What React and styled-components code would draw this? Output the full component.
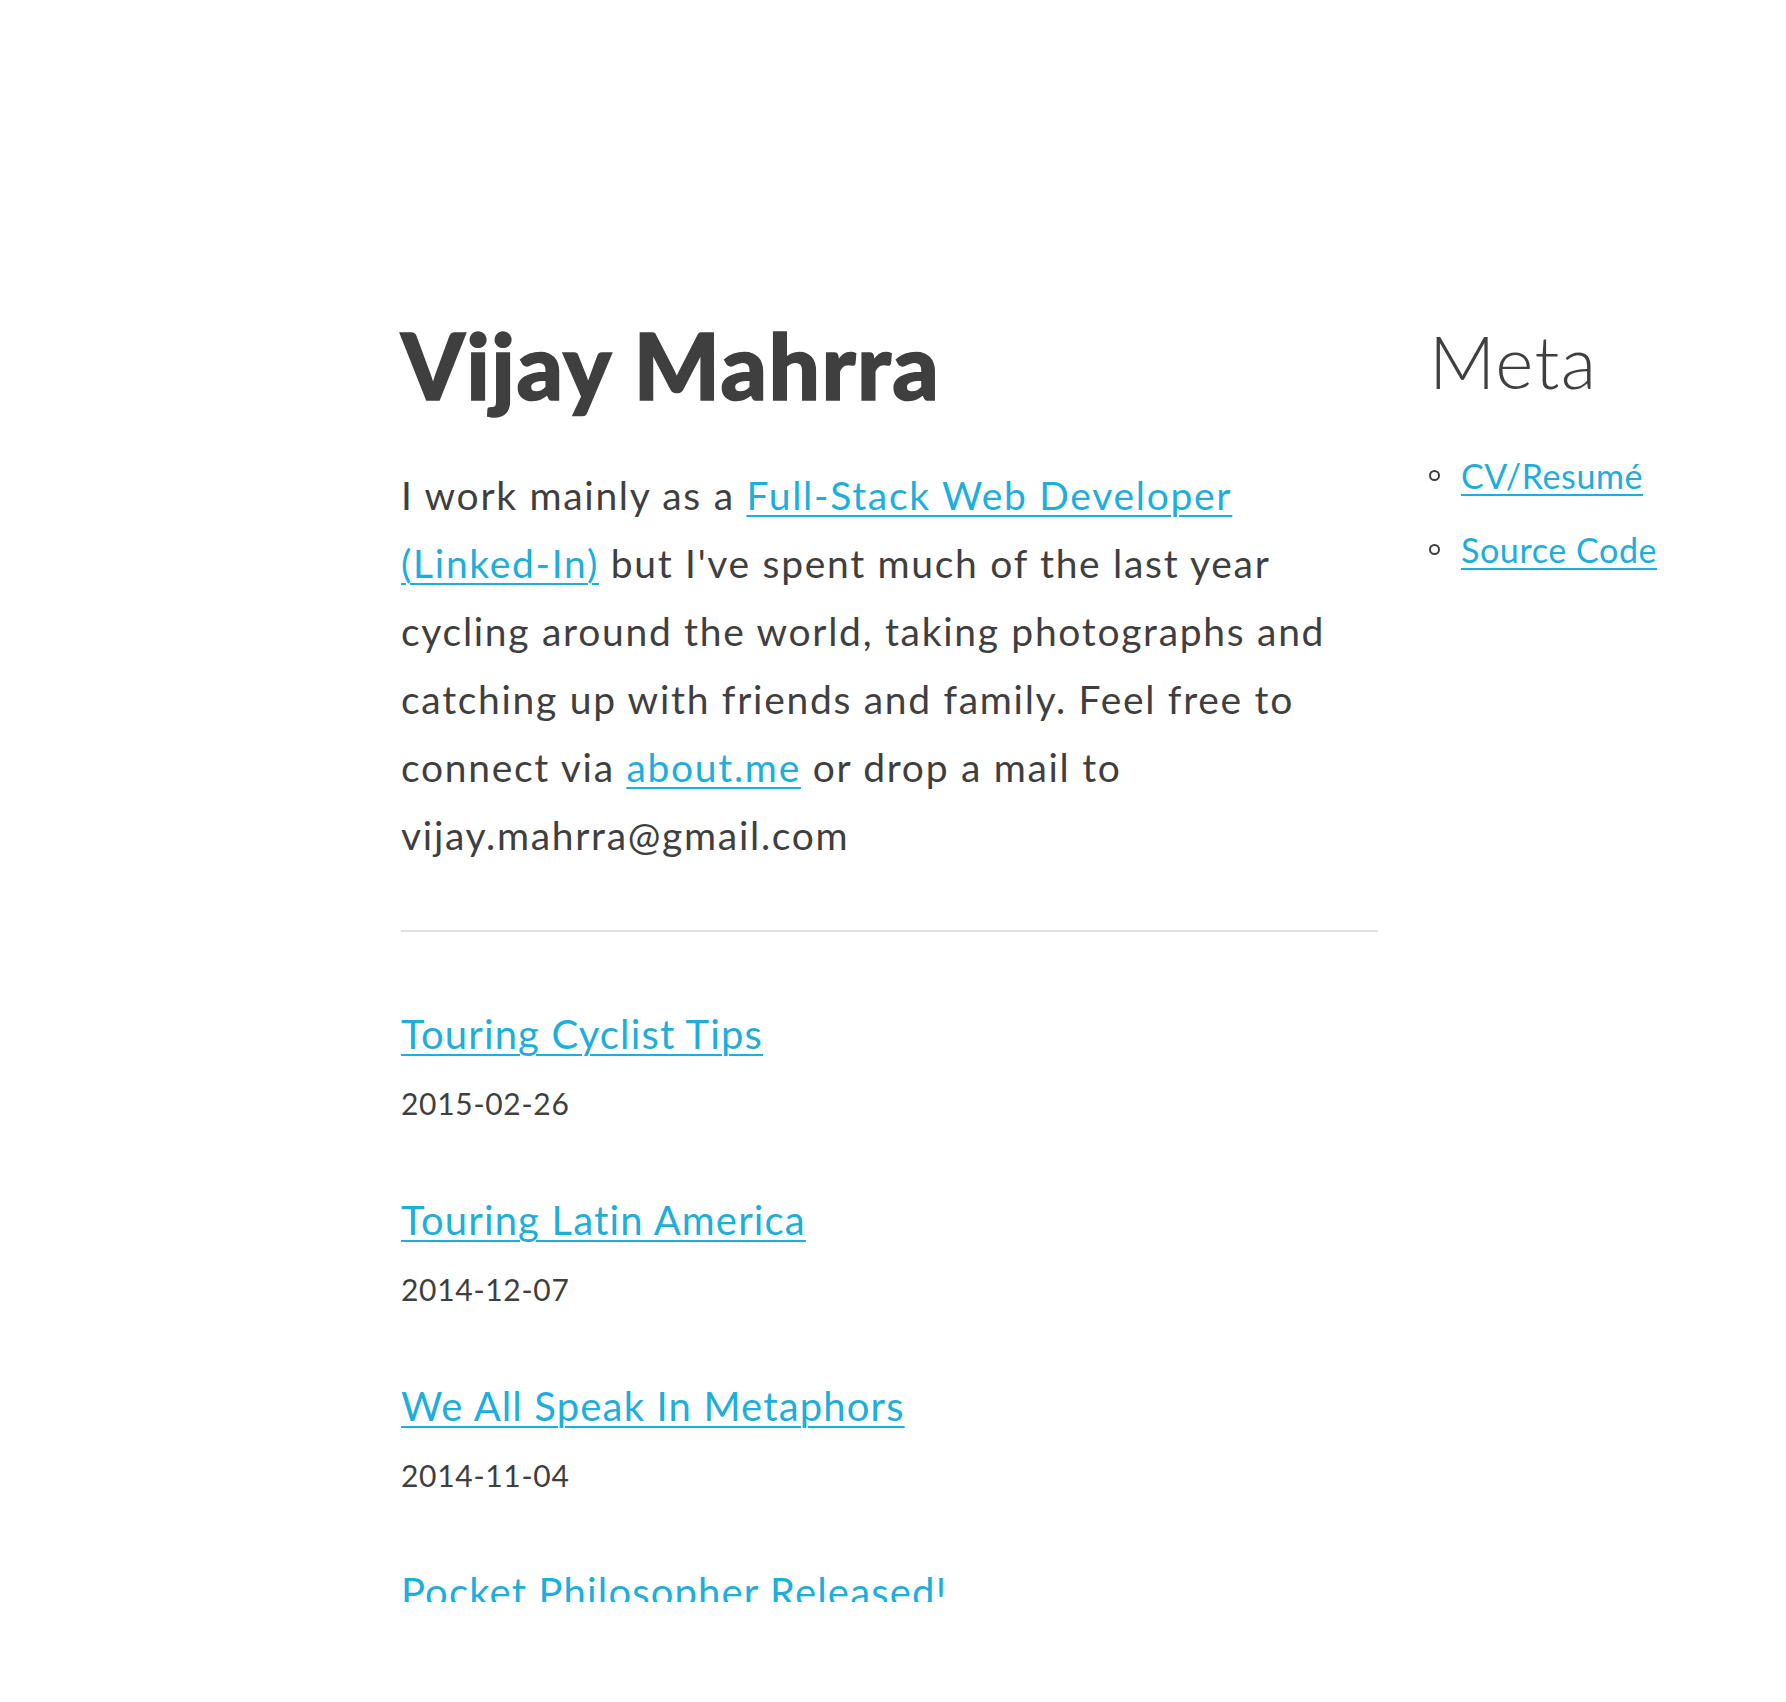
import React from 'react'
import styled, { createGlobalStyle } from 'styled-components';

const GlobalStyle = createGlobalStyle`
  html, body {
    margin: 0;
    padding: 0;
    background: #fff;
  }
  body {
    font-family: Lato, "Open Sans", sans-serif;
    color: #3f3f3f;
  }
`;

const Page = styled.div`
  height: 1602px;
  overflow: hidden;
  padding: 310px 0 0 401px;
  box-sizing: border-box;
  display: flex;
  align-items: flex-start;
`;

const Main = styled.main`
  width: 977px;
  flex-shrink: 0;
`;

const Name = styled.h1`
  margin: 0;
  font-size: 91px;
  line-height: 1.2;
  font-weight: 900;
  letter-spacing: 1.4px;
  -webkit-text-stroke: 1.5px #3f3f3f;
`;

const Intro = styled.p`
  margin: 42px 0 0;
  max-width: 955px;
  font-size: 39px;
  line-height: 68px;
  font-weight: 400;
  letter-spacing: 1.7px;
`;

const Link = styled.a`
  color: #1eaedb;
  text-decoration: underline;
  text-decoration-thickness: 2px;
  text-underline-offset: 5px;
`;

const Rule = styled.hr`
  margin: 61px 0 0;
  border: 0;
  border-top: 2px solid #e1e1e1;
`;

const Posts = styled.ul`
  list-style: none;
  margin: 78px 0 0;
  padding: 0;
`;

const Post = styled.li`
  margin-bottom: 75px;
`;

const PostTitle = styled.h2`
  margin: 0;
  font-size: 40px;
  line-height: 1.2;
  font-weight: 400;
  letter-spacing: 1.15px;
`;

const PostDate = styled.div`
  margin-top: 27px;
  font-size: 30px;
  line-height: 36px;
  letter-spacing: 0.7px;
`;

const Sidebar = styled.aside`
  margin-left: 51px;
  padding-top: 8px;
`;

const SideTitle = styled.h3`
  margin: 0;
  font-size: 73px;
  line-height: 1.2;
  font-weight: 300;
  letter-spacing: 1.2px;
`;

const MetaList = styled.ul`
  list-style: none;
  margin: 33px 0 0;
  padding: 0;
`;

const MetaItem = styled.li`
  display: flex;
  align-items: center;
  gap: 21px;
  font-size: 34px;
  line-height: 74px;
  letter-spacing: 0.6px;

  &::before {
    content: "";
    width: 11px;
    height: 11px;
    box-sizing: border-box;
    border: 2px solid #3f3f3f;
    border-radius: 50%;
  }
`;

const posts = [
  { title: 'Touring Cyclist Tips', date: '2015-02-26' },
  { title: 'Touring Latin America', date: '2014-12-07' },
  { title: 'We All Speak In Metaphors', date: '2014-11-04' },
  { title: 'Pocket Philosopher Released!', date: '2014-10-01' },
];

function App() {
  return (
    <>
      <GlobalStyle />
      <Page>
        <Main>
          <Name>Vijay Mahrra</Name>
          <Intro>
            I work mainly as a <Link href="#">Full-Stack Web Developer (Linked-In)</Link> but I've spent much of the last year cycling around the world, taking photographs and catching up with friends and family. Feel free to connect via <Link href="#">about.me</Link> or drop a mail to vijay.mahrra@gmail.com
          </Intro>
          <Rule />
          <Posts>
            {posts.map((p) => (
              <Post key={p.title}>
                <PostTitle><Link href="#">{p.title}</Link></PostTitle>
                <PostDate>{p.date}</PostDate>
              </Post>
            ))}
          </Posts>
        </Main>
        <Sidebar>
          <SideTitle>Meta</SideTitle>
          <MetaList>
            <MetaItem><Link href="#">CV/Resumé</Link></MetaItem>
            <MetaItem><Link href="#">Source Code</Link></MetaItem>
          </MetaList>
        </Sidebar>
      </Page>
    </>
  )
}

export default App
